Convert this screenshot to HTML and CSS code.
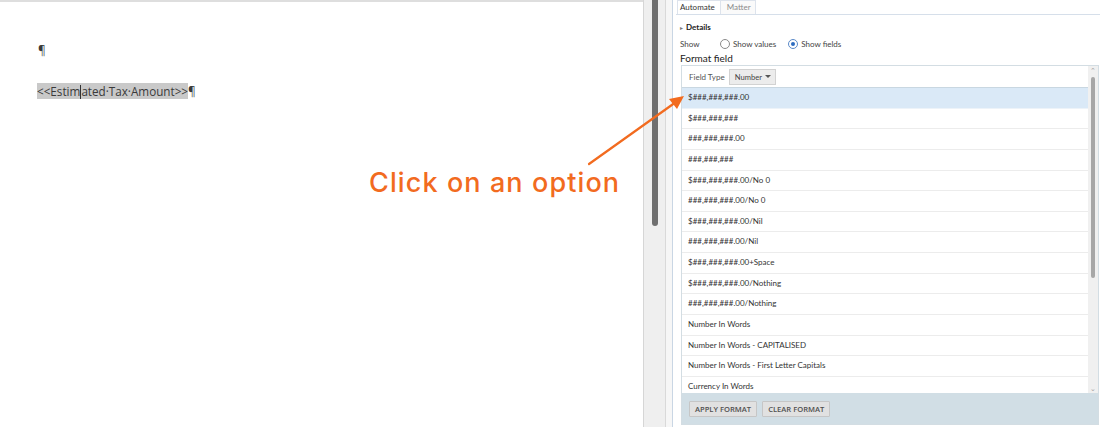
FILE: index.html
```html
<!DOCTYPE html>
<html>
<head>
<meta charset="utf-8">
<link rel="stylesheet" href="styles.css">
</head>
<body>
<div class="app">
  <div class="doc">
    <p class="para mark">¶</p>
    <p class="para field"><span class="sel">&lt;&lt;Estim<span class="caret"></span>ated·Tax·Amount&gt;&gt;</span>¶</p>
  </div>
  <div class="gutter">
    <div class="track"><div class="thumb"></div></div>
    <div class="gap"></div>
  </div>
  <div class="panel">
    <div class="tabs">
      <div class="tab active">Automate</div>
      <div class="tab">Matter</div>
    </div>
    <div class="details"><span class="tri">▸</span>Details</div>
    <div class="show">
      <span class="show-label">Show</span>
      <label class="radio"><span class="dot"></span>Show values</label>
      <label class="radio on"><span class="dot"></span>Show fields</label>
    </div>
    <div class="ff-title">Format field</div>
    <div class="box">
      <div class="box-main">
        <div class="list-col">
          <div class="list-head">
            <span class="ft">Field Type</span>
            <span class="select">Number<span class="caret-down"></span></span>
          </div>
          <div class="rows">
            <div class="row hl">$###,###,###.00</div>
            <div class="row">$###,###,###</div>
            <div class="row">###,###,###.00</div>
            <div class="row">###,###,###</div>
            <div class="row">$###,###,###.00/No 0</div>
            <div class="row">###,###,###.00/No 0</div>
            <div class="row">$###,###,###.00/Nil</div>
            <div class="row">###,###,###.00/Nil</div>
            <div class="row">$###,###,###.00+Space</div>
            <div class="row">$###,###,###.00/Nothing</div>
            <div class="row">###,###,###.00/Nothing</div>
            <div class="row">Number In Words</div>
            <div class="row">Number In Words - CAPITALISED</div>
            <div class="row">Number In Words - First Letter Capitals</div>
            <div class="row">Currency In Words</div>
          </div>
        </div>
        <div class="vscroll">
          <span class="chev up">⌃</span>
          <div class="vthumb"></div>
          <span class="chev down">⌄</span>
        </div>
      </div>
      <div class="box-foot">
        <button class="btn">APPLY FORMAT</button>
        <button class="btn">CLEAR FORMAT</button>
      </div>
    </div>
  </div>
</div>
<div class="callout">Click on an option</div>
<svg class="arrow" width="1105" height="427" viewBox="0 0 1105 427">
  <line x1="589" y1="164" x2="676" y2="102" stroke="#f26b1f" stroke-width="2.2" stroke-linecap="round"/>
  <polygon points="684,96 669,99 677,109" fill="#f26b1f"/>
</svg>
</body>
</html>
```
FILE: styles.css
```css
html, body {
  margin: 0;
  padding: 0;
  background: #ffffff;
}
body {
  width: 1105px;
  height: 427px;
  overflow: hidden;
  position: relative;
  font-family: "Lato", "Open Sans", sans-serif;
}
.app {
  display: flex;
  height: 427px;
}
.doc {
  width: 643px;
  border-top: 2px solid #dedede;
  box-sizing: border-box;
  padding: 40px 0 0 37px;
}
.para {
  margin: 0;
  font-family: "Open Sans", sans-serif;
  font-size: 11.7px;
  line-height: 16px;
  color: #3a3a3a;
}
.mark {
  padding-left: 1px;
  height: 16px;
}
.field {
  margin-top: 25px;
}
.sel {
  background: #c9c9c9;
  position: relative;
}
.caret {
  display: inline-block;
  width: 1px;
  height: 14px;
  background: #333;
  vertical-align: -3px;
}
.gutter {
  width: 30px;
  display: flex;
  border-left: 1px solid #d6d6d6;
  background: #efefef;
  box-sizing: border-box;
}
.track {
  width: 21px;
  display: flex;
  justify-content: center;
  border-right: 1px solid #d9d9d9;
}
.thumb {
  width: 6px;
  height: 226px;
  background: #6f6f6f;
  border-radius: 0 0 3px 3px;
}
.gap {
  flex: 1;
  background: #f6f6f6;
  border-right: 1px solid #c9d6e4;
}
.panel {
  flex: 1;
  padding-left: 3px;
  padding-right: 5px;
  font-size: 8px;
  color: #333;
}
.tabs {
  display: flex;
  height: 14px;
  border-bottom: 1px solid #d6dfea;
  padding-left: 1px;
}
.tab {
  padding: 0 4px 0 6px;
  line-height: 13px;
  font-size: 8px;
  color: #8a8a8a;
  border: 1px solid #dde3ec;
  border-bottom: none;
  border-left: none;
  background: #fafafa;
}
.tab.active {
  color: #333;
  background: #fff;
  border-left: 1px solid #dde3ec;
  padding: 0 5px 0 2px;
}
.details {
  margin-top: 6px;
  padding-left: 4px;
  font-weight: bold;
  font-size: 8px;
  line-height: 12px;
  color: #222;
}
.tri {
  font-size: 6px;
  color: #777;
  margin-right: 3px;
  font-weight: normal;
}
.show {
  display: flex;
  align-items: center;
  margin-top: 4px;
  padding-left: 4px;
  height: 12px;
  font-size: 8px;
  color: #444;
}
.show-label {
  width: 40px;
}
.radio {
  display: flex;
  align-items: center;
  margin-right: 12px;
}
.dot {
  width: 8px;
  height: 8px;
  border: 1px solid #8a8a8a;
  border-radius: 50%;
  margin-right: 3px;
  box-sizing: content-box;
  display: flex;
  align-items: center;
  justify-content: center;
}
.radio.on .dot {
  border-color: #5b8ac8;
}
.radio.on .dot::after {
  content: "";
  width: 4px;
  height: 4px;
  border-radius: 50%;
  background: #2d6cc0;
}
.ff-title {
  padding-left: 4px;
  margin-top: 2px;
  font-size: 10px;
  line-height: 13px;
  color: #222;
}
.box {
  margin-left: 5px;
  margin-top: 0;
  border: 1px solid #d3dde3;
  width: 418px;
  box-sizing: border-box;
}
.box-main {
  display: flex;
}
.list-col {
  flex: 1;
}
.list-head {
  height: 22px;
  border-bottom: 1px solid #c9d7e1;
  display: flex;
  align-items: center;
  padding-left: 7px;
  box-sizing: border-box;
  color: #555;
}
.ft {
  margin-right: 4px;
}
.select {
  display: flex;
  align-items: center;
  height: 16px;
  box-sizing: border-box;
  padding: 0 4px 0 5px;
  background: #ececec;
  border: 1px solid #d2d2d2;
  color: #444;
  font-size: 7.6px;
  width: 47px;
}
.caret-down {
  margin-left: auto;
  width: 0;
  height: 0;
  border-left: 3px solid transparent;
  border-right: 3px solid transparent;
  border-top: 3px solid #555;
}
.rows {
  height: 305px;
  overflow: hidden;
}
.row {
  height: 20.64px;
  box-sizing: border-box;
  border-bottom: 1px solid #ececec;
  padding-left: 6px;
  line-height: 19px;
  font-size: 8px;
  color: #333;
  white-space: nowrap;
}
.row.hl {
  background: #dae9f7;
  border-bottom-color: #edf3f9;
}
.vscroll {
  width: 10px;
  background: #f0f0f0;
  position: relative;
  display: flex;
  flex-direction: column;
  align-items: center;
}
.chev {
  font-size: 7px;
  line-height: 8px;
  color: #a0a0a0;
  height: 9px;
}
.vthumb {
  width: 4px;
  height: 201px;
  background: #a7a7a7;
  border-radius: 2px;
  margin-top: 2px;
}
.chev.down {
  margin-top: auto;
}
.box-foot {
  height: 31px;
  background: #d1dee5;
  display: flex;
  align-items: center;
  padding-left: 7px;
  gap: 5px;
}
.btn {
  height: 16px;
  padding: 0 5px;
  font-family: "Open Sans", sans-serif;
  font-size: 7.6px;
  font-weight: 600;
  color: #505050;
  background: #e1e1e1;
  border: 1px solid #c6c6c6;
  border-radius: 1px;
  line-height: 14px;
}
.callout {
  position: absolute;
  left: 369px;
  top: 165px;
  font-family: "Inter", sans-serif;
  font-size: 27px;
  font-weight: 500;
  letter-spacing: 1.1px;
  color: #f26b1f;
  line-height: 36px;
  white-space: nowrap;
}
.arrow {
  position: absolute;
  left: 0;
  top: 0;
  pointer-events: none;
}
```
